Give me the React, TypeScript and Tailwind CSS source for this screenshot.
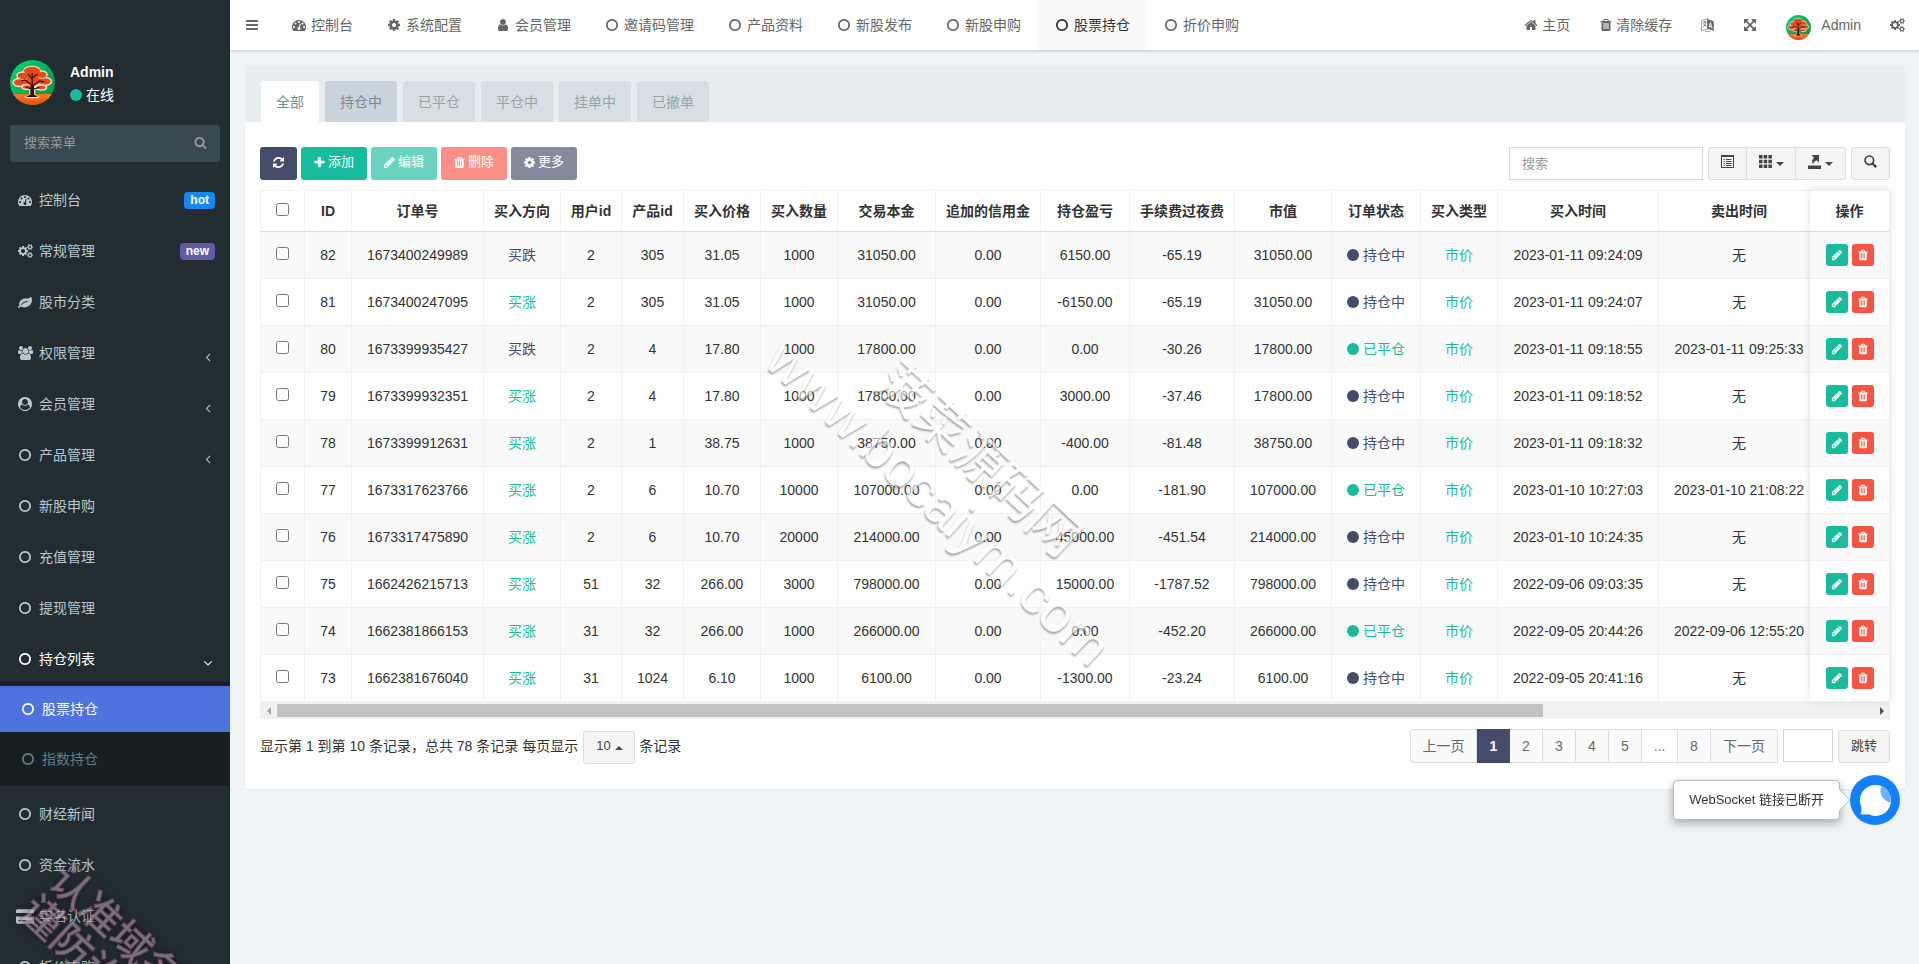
import { useState } from "react";
import type { ReactNode } from "react";
import clsx from "clsx";

// Font Awesome 4 outlines, drawn on a 1792 grid
const ICONS = {
  bars: "M1664 1344v128q0 26-19 45t-45 19h-1408q-26 0-45-19t-19-45v-128q0-26 19-45t45-19h1408q26 0 45 19t19 45zm0-512v128q0 26-19 45t-45 19h-1408q-26 0-45-19t-19-45v-128q0-26 19-45t45-19h1408q26 0 45 19t19 45zm0-512v128q0 26-19 45t-45 19h-1408q-26 0-45-19t-19-45v-128q0-26 19-45t45-19h1408q26 0 45 19t19 45z",
  search:
    "M1216 832q0-185-131.5-316.5t-316.5-131.5-316.5 131.5-131.5 316.5 131.5 316.5 316.5 131.5 316.5-131.5 131.5-316.5zm512 832q0 52-38 90t-90 38q-54 0-90-38l-343-342q-179 124-399 124-143 0-273.5-55.5t-225-150-150-225-55.5-273.5 55.5-273.5 150-225 225-150 273.5-55.5 273.5 55.5 225 150 150 225 55.5 273.5q0 220-124 399l343 343q37 37 37 90z",
  circleO:
    "M896 352q-148 0-273 73t-198 198-73 273 73 273 198 198 273 73 273-73 198-198 73-273-73-273-198-198-273-73zm768 544q0 209-103 385.5t-279.5 279.5-385.5 103-385.5-103-279.5-279.5-103-385.5 103-385.5 279.5-279.5 385.5-103 385.5 103 279.5 279.5 103 385.5z",
  tachometer:
    "M384 1152q0-53-37.5-90.5t-90.5-37.5-90.5 37.5-37.5 90.5 37.5 90.5 90.5 37.5 90.5-37.5 37.5-90.5zm192-448q0-53-37.5-90.5t-90.5-37.5-90.5 37.5-37.5 90.5 37.5 90.5 90.5 37.5 90.5-37.5 37.5-90.5zm428 481l101-382q6-26-7.5-48.5t-38.5-29.5-48 6.5-30 39.5l-101 382q-60 5-107 43.5t-63 98.5q-20 77 20 146t117 89 146-20 89-117q16-60-6-117t-72-91zm660-33q0-53-37.5-90.5t-90.5-37.5-90.5 37.5-37.5 90.5 37.5 90.5 90.5 37.5 90.5-37.5 37.5-90.5zm-640-640q0-53-37.5-90.5t-90.5-37.5-90.5 37.5-37.5 90.5 37.5 90.5 90.5 37.5 90.5-37.5 37.5-90.5zm448 192q0-53-37.5-90.5t-90.5-37.5-90.5 37.5-37.5 90.5 37.5 90.5 90.5 37.5 90.5-37.5 37.5-90.5zm320 448q0 261-141 483-19 29-54 29h-1402q-35 0-54-29-141-221-141-483 0-182 71-348t191-286 286-191 348-71 348 71 286 191 191 286 71 348z",
  cog: "M1152 896q0-106-75-181t-181-75-181 75-75 181 75 181 181 75 181-75 75-181zm512-109v222q0 12-8 23t-20 13l-185 28q-19 54-39 91 35 50 107 138 10 12 10 25t-9 23q-27 37-99 108t-94 71q-12 0-26-9l-138-108q-44 23-91 38-16 136-29 186-7 28-36 28h-222q-14 0-24.5-8.5t-11.5-21.5l-28-184q-49-16-90-37l-141 107q-10 9-25 9-14 0-25-11-126-114-165-168-7-10-7-23 0-12 8-23 15-21 51-66.5t54-70.5q-27-50-41-99l-183-27q-13-2-21-12.5t-8-23.5v-222q0-12 8-23t19-13l186-28q14-46 39-92-40-57-107-138-10-12-10-24 0-10 9-23 26-36 98.5-107.5t94.5-71.5q13 0 26 10l138 107q44-23 91-38 16-136 29-186 7-28 36-28h222q14 0 24.5 8.5t11.5 21.5l28 184q49 16 90 37l142-107q9-9 24-9 13 0 25 10 129 119 165 170 7 8 7 22 0 12-8 23-15 21-51 66.5t-54 70.5q26 50 41 98l183 28q13 2 21 12.5t8 23.5z",
  user: "M1536 1399q0 109-62.5 187t-150.5 78h-854q-88 0-150.5-78t-62.5-187q0-85 8.5-160.5t31.5-152 58.5-131 94-89 134.5-34.5q131 128 313 128t313-128q76 0 134.5 34.5t94 89 58.5 131 31.5 152 8.5 160.5zm-256-887q0 159-112.5 271.5t-271.5 112.5-271.5-112.5-112.5-271.5 112.5-271.5 271.5-112.5 271.5 112.5 112.5 271.5z",
  plus: "M1600 736v192q0 40-28 68t-68 28h-416v416q0 40-28 68t-68 28h-192q-40 0-68-28t-28-68v-416h-416q-40 0-68-28t-28-68v-192q0-40 28-68t68-28h416v-416q0-40 28-68t68-28h192q40 0 68 28t28 68v416h416q40 0 68 28t28 68z",
  pencil:
    "M491 1536l91-91-235-235-91 91v107h128v128h107zm523-928q0-22-22-22-10 0-17 7l-542 542q-7 7-7 17 0 22 22 22 10 0 17-7l542-542q7-7 7-17zm-54-192l416 416-832 832h-416v-416zm683 96q0 53-37 90l-166 166-416-416 166-165q36-38 90-38 53 0 91 38l235 234q37 39 37 91z",
  trash:
    "M704 1376v-704q0-14-9-23t-23-9h-64q-14 0-23 9t-9 23v704q0 14 9 23t23 9h64q14 0 23-9t9-23zm256 0v-704q0-14-9-23t-23-9h-64q-14 0-23 9t-9 23v704q0 14 9 23t23 9h64q14 0 23-9t9-23zm256 0v-704q0-14-9-23t-23-9h-64q-14 0-23 9t-9 23v704q0 14 9 23t23 9h64q14 0 23-9t9-23zm-544-992h448l-48-117q-7-9-17-11h-317q-10 2-17 11zm928 32v64q0 14-9 23t-23 9h-96v948q0 83-47 143.5t-113 60.5h-832q-66 0-113-58.5t-47-141.5v-952h-96q-14 0-23-9t-9-23v-64q0-14 9-23t23-9h309l70-167q15-37 54-63t79-26h320q40 0 79 26t54 63l70 167h309q14 0 23 9t9 23z",
  refresh:
    "M1639 1056q0 5-1 7-64 268-268 434.5t-478 166.5q-146 0-282.5-55t-243.5-157l-129 129q-19 19-45 19t-45-19-19-45v-448q0-26 19-45t45-19h448q26 0 45 19t19 45-19 45l-137 137q71 66 161 102t187 36q134 0 250-65t186-179q11-17 53-117 8-23 30-23h192q13 0 22.5 9.5t9.5 22.5zm25-800v448q0 26-19 45t-45 19h-448q-26 0-45-19t-19-45 19-45l138-138q-148-137-349-137-134 0-250 65t-186 179q-11 17-53 117-8 23-30 23h-199q-13 0-22.5-9.5t-9.5-22.5v-7q65-268 270-434.5t480-166.5q146 0 284 55.5t245 156.5l130-129q19-19 45-19t45 19 19 45z",
  home: "M1472 992v480q0 26-19 45t-45 19h-384v-384h-256v384h-384q-26 0-45-19t-19-45v-480q0-1 .5-3t.5-3l575-474 575 474q1 2 1 6zm223-69l-62 74q-8 9-21 11h-3q-13 0-21-7l-692-577-692 577q-12 8-24 7-13-2-21-11l-62-74q-8-10-7-23.5t11-21.5l719-599q32-26 76-26t76 26l244 204v-195q0-14 9-23t23-9h192q14 0 23 9t9 23v408l219 182q10 8 11 21.5t-7 23.5z",
  leaf: "M1280 832q0-26-19-45t-45-19q-172 0-318 49.5t-259.5 134-235.5 219.5q-19 21-19 45 0 26 19 45t45 19q24 0 45-19 27-24 74-71t67-66q137-124 268.5-176t313.5-52q26 0 45-19t19-45zm512-198q0 95-20 193-46 224-184.5 383t-357.5 268q-214 108-438 108-148 0-286-47-15-5-88-42t-96-37q-16 0-39.5 32t-45 70-52.5 70-60 32q-43 0-63.5-17.5t-45.5-59.5q-2-4-6-11t-5.5-10-3-9.5-1.5-13.5q0-35 31-73.5t68-65.5 68-56 31-48q0-4-14-38t-16-44q-9-51-9-104 0-115 43.5-220t119-184.5 170.5-139 204-95.5q55-18 145-25.5t179.5-9 178.5-6 163.5-24 113.5-56.5l29.5-29.5 29.5-28 27-20 36.5-16 43.5-4.5q39 0 70.5 46t47.5 112 24 124 8 96z",
  expand:
    "M1411 541l-355 355 355 355 144-144q29-31 70-14 39 17 39 59v448q0 26-19 45t-45 19h-448q-42 0-59-40-17-39 14-69l144-144-355-355-355 355 144 144q31 30 14 69-17 40-59 40h-448q-26 0-45-19t-19-45v-448q0-42 40-59 39-17 69 14l144 144 355-355-355-355-144 144q-19 19-45 19-12 0-24-5-40-17-40-59v-448q0-26 19-45t45-19h448q42 0 59 40 17 39-14 69l-144 144 355 355 355-355-144-144q-31-30-14-69 17-40 59-40h448q26 0 45 19t19 45v448q0 42-39 59-13 5-25 5-26 0-45-19z",
  angleLeft:
    "M1203 544q0 13-10 23l-393 393 393 393q10 10 10 23t-10 23l-50 50q-10 10-23 10t-23-10l-466-466q-10-10-10-23t10-23l466-466q10-10 23-10t23 10l50 50q10 10 10 23z",
  angleDown:
    "M1395 736q0 13-10 23l-466 466q-10 10-23 10t-23-10l-466-466q-10-10-10-23t10-23l50-50q10-10 23-10t23 10l393 393 393-393q10-10 23-10t23 10l50 50q10 10 10 23z",
  users:
    "M593 896q-162 5-265 128h-134q-82 0-138-40.5t-56-118.5q0-353 124-353 6 0 43.5 21t97.5 42.5 119 21.5q67 0 133-23-5 37-5 66 0 159 93 293zm1071 637q0 120-73 189.5t-194 69.5h-874q-121 0-194-69.5t-73-189.5q0-53 3.5-103.5t14-109 26.5-108.5 43-97.5 62-81 85.5-53.5 111.5-20q10 0 43 21.5t73 48 107 48 135 21.5 135-21.5 107-48 73-48 43-21.5q61 0 111.5 20t85.5 53.5 62 81 43 97.5 26.5 108.5 14 109 3.5 103.5zm-1024-1277q0 106-75 181t-181 75-181-75-75-181 75-181 181-75 181 75 75 181zm704 384q0 159-112.5 271.5t-271.5 112.5-271.5-112.5-112.5-271.5 112.5-271.5 271.5-112.5 271.5 112.5 112.5 271.5zm576 225q0 78-56 118.5t-138 40.5h-134q-103-123-265-128 93-134 93-293 0-29-5-66 66 23 133 23 59 0 119-21.5t97.5-42.5 43.5-21q124 0 124 353zm-128-609q0 106-75 181t-181 75-181-75-75-181 75-181 181-75 181 75 75 181z",
  cogs: "M896 896q0-106-75-181t-181-75-181 75-75 181 75 181 181 75 181-75 75-181zm768 512q0-52-38-90t-90-38-90 38-38 90q0 53 37.5 90.5t90.5 37.5 90.5-37.5 37.5-90.5zm0-1024q0-52-38-90t-90-38-90 38-38 90q0 53 37.5 90.5t90.5 37.5 90.5-37.5 37.5-90.5zm-384 421v185q0 10-7 19.5t-16 10.5l-155 24q-11 35-32 76 34 48 90 115 7 11 7 20 0 12-7 19-23 30-82.5 89.5t-78.5 59.5q-11 0-21-7l-115-90q-37 19-77 31-11 108-23 155-7 24-30 24h-186q-11 0-20-7.5t-10-17.5l-23-153q-34-10-75-31l-118 89q-7 7-20 7-11 0-21-8-144-133-144-160 0-9 7-19 10-14 41-53t47-61q-23-44-35-82l-152-24q-10-1-17-9.5t-7-19.5v-185q0-10 7-19.5t16-10.5l155-24q11-35 32-76-34-48-90-115-7-11-7-20 0-12 7-20 22-30 82-89t79-59q11 0 21 7l115 90q34-18 77-32 11-108 23-154 7-24 30-24h186q11 0 20 7.5t10 17.5l23 153q34 10 75 31l118-89q8-7 20-7 11 0 21 8 144 133 144 160 0 8-7 19-12 16-42 54t-45 60q23 48 34 82l152 23q10 2 17 10.5t7 19.5zm640 533v140q0 16-149 31-12 27-30 52 51 113 51 138 0 4-4 7-122 71-124 71-8 0-46-47t-52-68q-20 2-30 2t-30-2q-14 21-52 68t-46 47q-2 0-124-71-4-3-4-7 0-25 51-138-18-25-30-52-149-15-149-31v-140q0-16 149-31 13-29 30-52-51-113-51-138 0-4 4-7 4-2 35-20t59-34 30-16q8 0 46 46.5t52 67.5q20-2 30-2t30 2q51-71 92-112l6-2q4 0 124 70 4 3 4 7 0 25-51 138 17 23 30 52 149 15 149 31zm0-1024v140q0 16-149 31-12 27-30 52 51 113 51 138 0 4-4 7-122 71-124 71-8 0-46-47t-52-68q-20 2-30 2t-30-2q-14 21-52 68t-46 47q-2 0-124-71-4-3-4-7 0-25 51-138-18-25-30-52-149-15-149-31v-140q0-16 149-31 13-29 30-52-51-113-51-138 0-4 4-7 4-2 35-20t59-34 30-16q8 0 46 46.5t52 67.5q20-2 30-2t30 2q51-71 92-112l6-2q4 0 124 70 4 3 4 7 0 25-51 138 17 23 30 52 149 15 149 31z",
  userCircle:
    "M1523 1339q-22-155-87.5-257.5t-184.5-118.5q-67 74-159.5 115.5t-195.5 41.5-195.5-41.5-159.5-115.5q-119 16-184.5 118.5t-87.5 257.5q106 150 271 237.5t356 87.5 356-87.5 271-237.5zm-243-699q0-159-112.5-271.5t-271.5-112.5-271.5 112.5-112.5 271.5 112.5 271.5 271.5 112.5 271.5-112.5 112.5-271.5zm512 256q0 182-71 347.5t-190.5 286-285.5 191.5-349 71q-182 0-348-71t-286-191-191-286-71-348 71-348 191-286 286-191 348-71 348 71 286 191 191 286 71 348z",
  creditCard:
    "M0 1504v-608h1920v608q0 66-47 113t-113 47h-1600q-66 0-113-47t-47-113zm640-224v128h384v-128h-384zm-384 0v128h256v-128h-256zm1504-1152q66 0 113 47t47 113v224h-1920v-224q0-66 47-113t113-47h1600z",
};

type IconName = keyof typeof ICONS;

const WIDE: IconName[] = ["users", "cogs", "creditCard"];

function Icon({ name, size = 14 }: { name: IconName; size?: 12 | 13 | 14 | 17 }) {
  const wide = WIDE.includes(name);
  return (
    <svg
      aria-hidden="true"
      viewBox={wide ? "0 0 1920 1792" : "0 0 1792 1792"}
      fill="currentColor"
      fillRule={name === "userCircle" ? "evenodd" : "nonzero"}
      className={clsx(
        "shrink-0 overflow-visible",
        size === 12 && "h-3 w-3",
        size === 13 && "h-[13px] w-[13px]",
        size === 14 && "h-[14px]",
        size === 14 && (wide ? "w-[15px]" : "w-[14px]"),
        size === 17 && "h-[17px] w-[18px]",
      )}
    >
      <path d={ICONS[name]} />
    </svg>
  );
}

function Avatar({ className }: { className: string }) {
  return (
    <svg viewBox="0 0 45 45" className={className} role="img" aria-label="Admin">
      <defs>
        <clipPath id="avatarClip">
          <circle cx="22.5" cy="22.5" r="22.5" />
        </clipPath>
        <linearGradient id="avatarSky" x1="0" y1="0" x2="1" y2="1">
          <stop offset="0" stopColor="#00d878" />
          <stop offset="1" stopColor="#078a3e" />
        </linearGradient>
        <linearGradient id="avatarGround" x1="0" y1="0" x2="0" y2="1">
          <stop offset="0" stopColor="#f47a1c" />
          <stop offset="1" stopColor="#f04a10" />
        </linearGradient>
      </defs>
      <g clipPath="url(#avatarClip)">
        <rect width="45" height="45" fill="url(#avatarSky)" />
        <rect y="34" width="45" height="11" fill="url(#avatarGround)" />
        <g fill="#e8481a" stroke="#f5d9c0" strokeWidth="1.6">
          <path d="M15 37.5 20 35.5V26h4.5v9.5L29 37.5z" fill="#2a1512" />
          <ellipse cx="22" cy="10.5" rx="8" ry="4" />
          <ellipse cx="13" cy="15.5" rx="6" ry="3.5" />
          <ellipse cx="31" cy="14.5" rx="6" ry="3.5" />
          <ellipse cx="10" cy="22.5" rx="7" ry="4" />
          <ellipse cx="34.5" cy="21.5" rx="7" ry="4" />
          <ellipse cx="17" cy="27" rx="5" ry="2.5" />
          <ellipse cx="31" cy="27.5" rx="5.5" ry="2.5" />
        </g>
        <g fill="#e8481a">
          <ellipse cx="22" cy="11" rx="8" ry="4" />
          <ellipse cx="17" cy="18" rx="8" ry="4" />
          <ellipse cx="28" cy="17" rx="8" ry="4" />
          <ellipse cx="22" cy="22" rx="10" ry="3" />
        </g>
        <g fill="none" stroke="#f5d9c0" strokeWidth=".8">
          <path d="M9 18.5q4 2 8 .5M36 17.5q-4 2-8 0M13 25.5q3-2 6-1M32 25q-3-2-6-.5" />
        </g>
        <g fill="none" stroke="#2a1512" strokeWidth="1.2">
          <path d="M22.2 37V13M22 25l-7-5-4 1M22.5 26l7-5 5 1M22 19l-4-5M22.5 18l5-4M21 29l-5-2M23.5 29l6-1.5" />
        </g>
        <path d="M16 37l4.5-2.5V25h3.5v9.5l4 2.5z" fill="#2a1512" />
      </g>
    </svg>
  );
}

function Caret({ up = false }: { up?: boolean }) {
  return (
    <svg aria-hidden="true" viewBox="0 0 8 4" className="h-1 w-2 shrink-0" fill="currentColor">
      <path d={up ? "M0 4h8L4 0z" : "M0 0h8L4 4z"} />
    </svg>
  );
}

interface MenuItem {
  icon: IconName;
  label: string;
  badge?: string;
  arrow?: boolean;
}

const MENU_TOP: MenuItem[] = [
  { icon: "tachometer", label: "控制台", badge: "hot" },
  { icon: "cogs", label: "常规管理", badge: "new" },
  { icon: "leaf", label: "股市分类" },
  { icon: "users", label: "权限管理", arrow: true },
  { icon: "userCircle", label: "会员管理", arrow: true },
  { icon: "circleO", label: "产品管理", arrow: true },
  { icon: "circleO", label: "新股申购" },
  { icon: "circleO", label: "充值管理" },
  { icon: "circleO", label: "提现管理" },
];

const MENU_BOTTOM: MenuItem[] = [
  { icon: "circleO", label: "财经新闻" },
  { icon: "circleO", label: "资金流水" },
  { icon: "creditCard", label: "实名认证" },
  { icon: "circleO", label: "折价申购" },
];

const NAV_TABS: { icon: IconName; label: string }[] = [
  { icon: "tachometer", label: "控制台" },
  { icon: "cog", label: "系统配置" },
  { icon: "user", label: "会员管理" },
  { icon: "circleO", label: "邀请码管理" },
  { icon: "circleO", label: "产品资料" },
  { icon: "circleO", label: "新股发布" },
  { icon: "circleO", label: "新股申购" },
  { icon: "circleO", label: "股票持仓" },
  { icon: "circleO", label: "折价申购" },
];

const STATUS_TABS = ["全部", "持仓中", "已平仓", "平仓中", "挂单中", "已撤单"];

const COLUMNS = [
  { title: "ID", width: 47 },
  { title: "订单号", width: 132 },
  { title: "买入方向", width: 77 },
  { title: "用户id", width: 61 },
  { title: "产品id", width: 62 },
  { title: "买入价格", width: 77 },
  { title: "买入数量", width: 77 },
  { title: "交易本金", width: 98 },
  { title: "追加的信用金", width: 105 },
  { title: "持仓盈亏", width: 89 },
  { title: "手续费过夜费", width: 105 },
  { title: "市值", width: 97 },
  { title: "订单状态", width: 89 },
  { title: "买入类型", width: 77 },
  { title: "买入时间", width: 161 },
  { title: "卖出时间", width: 161 },
];

interface Order {
  id: number;
  no: string;
  up: boolean;
  user: number;
  product: number;
  price: string;
  amount: number;
  principal: string;
  profit: string;
  fee: string;
  buyTime: string;
  sellTime?: string;
}

const ORDERS: Order[] = [
  { id: 82, no: "1673400249989", up: false, user: 2, product: 305, price: "31.05", amount: 1000, principal: "31050.00", profit: "6150.00", fee: "-65.19", buyTime: "2023-01-11 09:24:09" },
  { id: 81, no: "1673400247095", up: true, user: 2, product: 305, price: "31.05", amount: 1000, principal: "31050.00", profit: "-6150.00", fee: "-65.19", buyTime: "2023-01-11 09:24:07" },
  { id: 80, no: "1673399935427", up: false, user: 2, product: 4, price: "17.80", amount: 1000, principal: "17800.00", profit: "0.00", fee: "-30.26", buyTime: "2023-01-11 09:18:55", sellTime: "2023-01-11 09:25:33" },
  { id: 79, no: "1673399932351", up: true, user: 2, product: 4, price: "17.80", amount: 1000, principal: "17800.00", profit: "3000.00", fee: "-37.46", buyTime: "2023-01-11 09:18:52" },
  { id: 78, no: "1673399912631", up: true, user: 2, product: 1, price: "38.75", amount: 1000, principal: "38750.00", profit: "-400.00", fee: "-81.48", buyTime: "2023-01-11 09:18:32" },
  { id: 77, no: "1673317623766", up: true, user: 2, product: 6, price: "10.70", amount: 10000, principal: "107000.00", profit: "0.00", fee: "-181.90", buyTime: "2023-01-10 10:27:03", sellTime: "2023-01-10 21:08:22" },
  { id: 76, no: "1673317475890", up: true, user: 2, product: 6, price: "10.70", amount: 20000, principal: "214000.00", profit: "45000.00", fee: "-451.54", buyTime: "2023-01-10 10:24:35" },
  { id: 75, no: "1662426215713", up: true, user: 51, product: 32, price: "266.00", amount: 3000, principal: "798000.00", profit: "15000.00", fee: "-1787.52", buyTime: "2022-09-06 09:03:35" },
  { id: 74, no: "1662381866153", up: true, user: 31, product: 32, price: "266.00", amount: 1000, principal: "266000.00", profit: "0.00", fee: "-452.20", buyTime: "2022-09-05 20:44:26", sellTime: "2022-09-06 12:55:20" },
  { id: 73, no: "1662381676040", up: true, user: 31, product: 1024, price: "6.10", amount: 1000, principal: "6100.00", profit: "-1300.00", fee: "-23.24", buyTime: "2022-09-05 20:41:16" },
];

function SidebarLink({ item }: { item: MenuItem }) {
  return (
    <li className="mt-[5px]">
      <a href="#" className="flex h-[46px] items-center pr-[15px] pl-[15px] text-[#b8c7ce] hover:text-white">
        <span className="flex w-5 justify-center">
          <Icon name={item.icon} size={item.icon === "creditCard" ? 17 : 14} />
        </span>
        <span className="ml-1">{item.label}</span>
        {item.badge && (
          <span
            className={clsx(
              "ml-auto h-[17px] rounded-sm px-1.5 text-xs leading-4 font-bold text-white",
              item.badge === "hot" ? "bg-[#1688f1]" : "bg-[#605ca8]",
            )}
          >
            {item.badge}
          </span>
        )}
        {item.arrow && (
          <span className="mt-2 ml-auto">
            <Icon name="angleLeft" />
          </span>
        )}
      </a>
    </li>
  );
}

function Sidebar() {
  return (
    <aside className="w-[230px] shrink-0 overflow-hidden bg-[#222d32]">
      <div className="flex items-center px-2.5 pt-[60px]">
        <Avatar className="h-[45px] w-[45px]" />
        <div className="ml-[15px] text-white">
          <p className="mt-px font-bold leading-5">Admin</p>
          <a href="#" className="mt-[3px] flex items-center gap-1 leading-5">
            <span className="h-3 w-3 rounded-full bg-[#18bc9c]" />
            在线
          </a>
        </div>
      </div>
      <form className="mx-2.5 mt-5 flex h-[37px] items-center rounded-[3px] bg-[#374850] pr-[13px] pl-3.5">
        <input
          type="text"
          aria-label="搜索菜单"
          placeholder="搜索菜单"
          className="min-w-0 flex-1 bg-transparent text-[13px] text-white outline-none placeholder:text-[#999]"
        />
        <button type="button" aria-label="搜索" className="pb-0.5 text-[#999]">
          <Icon name="search" size={13} />
        </button>
      </form>
      <ul className="pt-2.5">
        {MENU_TOP.map((item) => (
          <SidebarLink key={item.label} item={item} />
        ))}
        <li className="mt-[5px]">
          <a href="#" className="flex h-[46px] items-center px-[15px] text-white">
            <span className="flex w-5 justify-center">
              <Icon name="circleO" />
            </span>
            <span className="ml-1">持仓列表</span>
            <span className="mt-2 ml-auto">
              <Icon name="angleDown" />
            </span>
          </a>
          <ul className="flex flex-col gap-1 bg-[#181f23] py-1">
            <li>
              <a href="#" className="flex h-[46px] items-center bg-[#4e73df] pl-[18px] text-white">
                <span className="flex w-5 justify-center">
                  <Icon name="circleO" />
                </span>
                <span className="ml-1">股票持仓</span>
              </a>
            </li>
            <li>
              <a href="#" className="flex h-[46px] items-center pl-[18px] text-[#5f7d8a]">
                <span className="flex w-5 justify-center">
                  <Icon name="circleO" />
                </span>
                <span className="ml-1">指数持仓</span>
              </a>
            </li>
          </ul>
        </li>
        {MENU_BOTTOM.map((item) => (
          <SidebarLink key={item.label} item={item} />
        ))}
      </ul>
    </aside>
  );
}

function Topbar() {
  return (
    <header className="relative z-10 flex h-[50px] shrink-0 items-stretch bg-white text-[#666] shadow-[0_1px_3px_rgba(0,0,0,0.2)]">
      <button type="button" aria-label="切换菜单" className="flex w-11 items-center pl-[15px]">
        <Icon name="bars" />
      </button>
      <nav className="flex">
        {NAV_TABS.map((tab) => {
          const active = tab.label === "股票持仓";
          return (
            <a
              key={tab.label}
              href="#"
              className={clsx(
                "flex items-center px-4",
                active ? "bg-[#f9f9f9] text-[#333]" : "hover:text-[#333]",
              )}
            >
              <span className="mr-[3px] flex w-[18px] justify-center">
                <Icon name={tab.icon} />
              </span>
              {tab.label}
            </a>
          );
        })}
      </nav>
      <div className="ml-auto flex items-center gap-[29px] pr-[14px]">
        <a href="#" className="flex items-center gap-1">
          <Icon name="home" />
          主页
        </a>
        <a href="#" className="flex items-center gap-[3px]">
          <Icon name="trash" />
          清除缓存
        </a>
        <a href="#" aria-label="语言">
          <svg viewBox="0 0 13 14" className="h-[14px] w-[13px]" fill="none" stroke="currentColor">
            <path d="M.5 2.5 7 .5v10.5l-6.5 2z" strokeWidth=".6" />
            <path d="M2 4.5l3.5-1M3.7 3v1.5M5 4q-1 4-3 5M2.3 5.500q1 2 3.2 2.5" strokeWidth=".8" />
            <path d="M6.5 1.5l6 2v9l-6-2z" fill="currentColor" strokeWidth=".6" />
            <path d="M8 9.5l1.5-5 1.7 6M8.5 8l2.2.7" stroke="#fff" strokeWidth=".9" />
            <path d="M4 13.4h5" strokeWidth=".6" />
          </svg>
        </a>
        <a href="#" aria-label="全屏">
          <Icon name="expand" />
        </a>
        <a href="#" className="flex items-center gap-2.5">
          <Avatar className="mt-1 h-[25px] w-[25px]" />
          Admin
        </a>
        <a href="#" aria-label="设置">
          <Icon name="cogs" />
        </a>
      </div>
    </header>
  );
}

function ToolButton({
  icon,
  color,
  label,
  disabled,
}: {
  icon: IconName;
  color: string;
  label: string;
  disabled?: boolean;
}) {
  return (
    <button
      type="button"
      disabled={disabled}
      className={clsx(
        "flex h-[33px] items-center gap-0.5 rounded-[3px] pr-[13px] pb-0.5 pl-3 text-[13px] text-white disabled:opacity-65",
        color,
      )}
    >
      <Icon name={icon} size={13} />
      {label}
    </button>
  );
}

function Toolbar() {
  const addon = "flex h-[33px] items-center justify-center gap-1 border-[#ddd] bg-[#f4f4f4] text-[#444]";
  return (
    <div className="flex items-center justify-between">
      <div className="flex gap-1">
        <button
          type="button"
          aria-label="刷新"
          className="flex h-[33px] w-[37px] items-center justify-center rounded-[3px] bg-[#444c69] pb-0.5 text-white"
        >
          <Icon name="refresh" size={13} />
        </button>
        <ToolButton icon="plus" color="bg-[#18bc9c]" label="添加" />
        <ToolButton icon="pencil" color="bg-[#18bc9c]" label="编辑" disabled />
        <ToolButton icon="trash" color="bg-[#f75444]" label="删除" disabled />
        <ToolButton icon="cog" color="bg-[#444c69]" label="更多" disabled />
      </div>
      <div className="flex gap-[5px]">
        <input
          type="text"
          aria-label="搜索"
          placeholder="搜索"
          className="h-[33px] w-[194px] border border-[#d2d6de] px-3 text-[13px] outline-none placeholder:text-[#999]"
        />
        <div className="flex">
          <button type="button" aria-label="切换视图" className={clsx(addon, "w-[39px] rounded-l-[3px] border")}>
            <svg viewBox="0 0 13 13" className="mb-1 h-[13px] w-[13px]" fill="none" stroke="currentColor">
              <path d="M.5.5h12v12H.5z" />
              <path d="M0 1h13" strokeWidth="2" />
              <path d="M2.5 4.5h1.2M5 4.5h5.5M2.5 6.5h1.2M5 6.5h5.5M2.5 8.5h1.2M5 8.5h5.5M2.5 10.5h1.2M5 10.5h5.5" />
            </svg>
          </button>
          <button type="button" aria-label="列" aria-haspopup="menu" className={clsx(addon, "w-[49px] border-y border-r")}>
            <svg viewBox="0 0 13 13" className="mb-1 h-[13px] w-[13px]" fill="currentColor">
              <path d="M0 0h3.5v3.5H0zM4.7 0h3.5v3.5H4.7zM9.4 0h3.5v3.5H9.4zM0 4.7h3.5v3.5H0zM4.7 4.7h3.5v3.5H4.7zM9.4 4.7h3.5v3.5H9.4zM0 9.4h3.5v3.5H0zM4.7 9.4h3.5v3.5H4.7zM9.4 9.4h3.5v3.5H9.4z" />
            </svg>
            <Caret />
          </button>
          <button
            type="button"
            aria-label="导出数据"
            aria-haspopup="menu"
            className={clsx(addon, "w-[50px] rounded-r-[3px] border-y border-r")}
          >
            <svg viewBox="0 0 13 14" className="mb-1 h-[14px] w-[13px]" fill="currentColor">
              <path d="M0 10.5h13V14H0z" />
              <path d="M3.5 0h7.5v7.5L8.7 5.2Q5.5 6.5 5 9 2.5 6 6 2.7z" />
            </svg>
            <Caret />
          </button>
        </div>
        <button type="button" aria-label="普通搜索" className={clsx(addon, "w-[39px] rounded-[3px] border")}>
          <svg viewBox="0 0 13 13" className="mb-1 h-[13px] w-[13px]" fill="none" stroke="currentColor">
            <circle cx="5.3" cy="5.3" r="4.3" strokeWidth="1.7" />
            <path d="M8.5 8.5l3.7 3.7" strokeWidth="2.3" />
          </svg>
        </button>
      </div>
    </div>
  );
}

function Cell({ children, className }: { children: ReactNode; className?: string }) {
  return <td className={clsx("h-[47px] border-r border-b border-[#f1f1f1]", className)}>{children}</td>;
}

function OrderRow({ order }: { order: Order }) {
  const closed = Boolean(order.sellTime);
  return (
    <tr className="bg-white odd:bg-[#f9f9f9]">
      <Cell className="border-l">
        <input type="checkbox" aria-label={`选择 ${order.id}`} className="mb-[5px] h-[13px] w-[13px] align-middle" />
      </Cell>
      <Cell>{order.id}</Cell>
      <Cell>{order.no}</Cell>
      <Cell className={order.up ? "text-[#18bc9c]" : "text-[#444c69]"}>{order.up ? "买涨" : "买跌"}</Cell>
      <Cell>{order.user}</Cell>
      <Cell>{order.product}</Cell>
      <Cell>{order.price}</Cell>
      <Cell>{order.amount}</Cell>
      <Cell>{order.principal}</Cell>
      <Cell>0.00</Cell>
      <Cell>{order.profit}</Cell>
      <Cell>{order.fee}</Cell>
      <Cell>{order.principal}</Cell>
      <Cell>
        <span
          className={clsx(
            "flex items-center justify-center gap-1",
            closed ? "text-[#18bc9c]" : "text-[#444c69]",
          )}
        >
          <span className="h-3 w-3 rounded-full bg-current" />
          {closed ? "已平仓" : "持仓中"}
        </span>
      </Cell>
      <Cell className="text-[#18bc9c]">市价</Cell>
      <Cell>{order.buyTime}</Cell>
      <Cell>{order.sellTime ?? "无"}</Cell>
      <Cell className="sticky right-0 bg-inherit">
        <div className="flex justify-center gap-1">
          <button
            type="button"
            aria-label="编辑"
            className="flex h-[22px] w-[22px] items-center justify-center rounded-[3px] bg-[#18bc9c] text-white"
          >
            <Icon name="pencil" size={12} />
          </button>
          <button
            type="button"
            aria-label="删除"
            className="flex h-[22px] w-[22px] items-center justify-center rounded-[3px] bg-[#f75444] text-white"
          >
            <Icon name="trash" size={12} />
          </button>
        </div>
      </Cell>
    </tr>
  );
}

function OrderTable() {
  const head = "h-[42px] border-t border-r border-b border-t-[#f1f1f1] border-r-[#f1f1f1] border-b-[#ddd] font-bold";
  return (
    <div className="relative mt-2.5">
      <div className="overflow-x-auto [scrollbar-width:none]">
        <table className="w-full min-w-[1640px] table-fixed border-separate border-spacing-0 text-center whitespace-nowrap text-[#333]">
          <colgroup>
            <col style={{ width: 45 }} />
            {COLUMNS.map((col) => (
              <col key={col.title} style={{ width: col.width }} />
            ))}
            <col style={{ width: 80 }} />
          </colgroup>
          <thead>
            <tr>
              <th className={clsx(head, "border-l border-l-[#f1f1f1]")}>
                <input type="checkbox" aria-label="全选" className="mb-[5px] h-[13px] w-[13px] align-middle" />
              </th>
              {COLUMNS.map((col) => (
                <th key={col.title} className={head}>
                  {col.title}
                </th>
              ))}
              <th className={clsx(head, "sticky right-0 bg-white")}>操作</th>
            </tr>
          </thead>
          <tbody>
            {ORDERS.map((order) => (
              <OrderRow key={order.id} order={order} />
            ))}
          </tbody>
        </table>
      </div>
      <div className="pointer-events-none absolute top-0 right-0 bottom-0 w-20 shadow-[0_-1px_8px_rgba(0,0,0,0.12)]" />
    </div>
  );
}

function ScrollBar({ visible, total }: { visible: number; total: number }) {
  return (
    <div className="flex h-[17px] items-center bg-[#f1f1f1]">
      <span className="flex w-[17px] justify-center text-[#a3a3a3]">
        <svg aria-hidden="true" viewBox="0 0 4 8" className="h-2 w-1" fill="currentColor">
          <path d="M4 0v8L0 4z" />
        </svg>
      </span>
      <div className="flex-1">
        <div className="h-[13px] bg-[#c1c1c1]" style={{ width: `${(visible / total) * 100}%` }} />
      </div>
      <span className="flex w-[17px] justify-center text-[#505050]">
        <svg aria-hidden="true" viewBox="0 0 4 8" className="h-2 w-1" fill="currentColor">
          <path d="M0 0v8l4-4z" />
        </svg>
      </span>
    </div>
  );
}

function Pagination() {
  const [page, setPage] = useState(1);
  const item = "h-[34px] border-y border-r border-[#ddd] bg-[#fafafa] text-[#666]";
  return (
    <div className="mt-2.5 flex items-start justify-between">
      <div className="flex h-[34px] items-center text-[#333]">
        <label htmlFor="pageSize">显示第 1 到第 10 条记录，总共 78 条记录 每页显示</label>
        <span className="relative mt-0.5 mr-1 ml-[5px]">
          <select
            id="pageSize"
            className="h-[33px] w-[52px] appearance-none rounded-[3px] border border-[#ddd] bg-[#f4f4f4] pb-0.5 pl-3 text-[13px] text-[#444]"
          >
            <option>10</option>
            <option>25</option>
            <option>50</option>
          </select>
          <span className="pointer-events-none absolute top-[15px] right-3 text-[#444]">
            <Caret up />
          </span>
        </span>
        条记录
      </div>
      <div className="flex gap-[5px]">
        <nav className="flex">
          <button type="button" className={clsx(item, "w-[67px] rounded-l-[3px] border-l")}>
            上一页
          </button>
          {[1, 2, 3, 4, 5].map((n) => (
            <button
              key={n}
              type="button"
              onClick={() => setPage(n)}
              className={
                n === page
                  ? "h-[34px] w-[33px] bg-[#444c69] font-bold text-white"
                  : clsx(item, "w-[33px]")
              }
            >
              {n}
            </button>
          ))}
          <span className="flex h-[34px] w-9 items-center justify-center border-y border-r border-[#ddd] text-[#777]">
            ...
          </span>
          <button type="button" onClick={() => setPage(8)} className={clsx(item, "w-[33px]")}>
            8
          </button>
          <button type="button" className={clsx(item, "w-[67px]")}>
            下一页
          </button>
        </nav>
        <input type="text" aria-label="页码" className="h-[33px] w-[50px] border border-[#d2d6de] px-2 outline-none" />
        <button
          type="button"
          className="mt-px h-[33px] w-[52px] rounded-[3px] border border-[#ddd] bg-[#f4f4f4] text-[13px] text-[#444]"
        >
          跳转
        </button>
      </div>
    </div>
  );
}

function ChatWidget() {
  return (
    <div className="absolute top-[775px] right-[19px] z-20 flex items-center">
      <div className="relative mr-2.5 rounded border border-[#bbb] bg-white px-[15px] py-[9px] text-[13px] leading-5 text-[#333] shadow-[0_3px_8px_rgba(0,0,0,0.3)]">
        WebSocket 链接已断开
        <svg viewBox="0 0 12 22" className="absolute top-2 -right-3 h-[22px] w-3">
          <path d="M0 0l11 11L0 22z" fill="#fff" />
          <path d="M.5.5 11 11 .5 21.5" fill="none" stroke="#bbb" />
        </svg>
      </div>
      <button type="button" aria-label="客服" className="h-[50px] w-[50px]">
        <svg viewBox="0 0 50 50" className="h-[50px] w-[50px]">
          <circle cx="25" cy="25" r="25" fill="#1281ff" />
          <path d="M25 10a15.5 15.5 0 1 1-6.5 29.3q-4 .7-8.2-.3 1.7-3 1.2-6.5A15.5 15.5 0 0 1 25 10z" fill="#fff" />
          <path d="M31.5 11a15.5 15.5 0 0 1 9.3 16.2A11.5 11.5 0 0 1 31.5 11z" fill="#6eb0ff" />
        </svg>
      </button>
    </div>
  );
}

function Watermarks() {
  return (
    <div aria-hidden="true" className="pointer-events-none absolute inset-0 z-30 overflow-hidden">
      <div className="absolute top-[286px] left-[835px] origin-top-left rotate-43 text-center leading-[58px] whitespace-nowrap text-white opacity-60 [text-shadow:1px_2px_2px_#777]">
        <p className="text-[51px]">菠菜源码网</p>
        <p className="text-[54px]">www.bocaiym.com</p>
      </div>
      <div className="absolute top-[858px] left-[70px] origin-top-left rotate-43 text-[41px] leading-[42px] font-medium whitespace-nowrap text-[#a5a5a5] opacity-60 [-webkit-text-stroke:1px_#a0457c] [text-shadow:0_0_8px_#000]">
        <p>认准域名</p>
        <p>谨防诈骗</p>
      </div>
    </div>
  );
}

export default function App() {
  const [tab, setTab] = useState("全部");

  return (
    <div className="relative flex h-screen overflow-hidden bg-[#eff3f6] font-['Liberation_Sans','Noto_Sans_CJK_SC',sans-serif] text-sm">
      <Sidebar />
      <div className="flex min-w-0 flex-1 flex-col">
        <Topbar />
        <main className="p-[15px] pr-3.5">
          <section className="rounded-[3px] bg-white shadow-[0_1px_1px_rgba(0,0,0,0.05)]">
            <div className="flex gap-1.5 rounded-t-[3px] bg-[#e8edf0] px-4 pt-4">
              {STATUS_TABS.map((label) => (
                <button
                  key={label}
                  type="button"
                  onClick={() => setTab(label)}
                  className={clsx(
                    "h-[41px] rounded-t-[3px] px-[15px]",
                    label === tab && "bg-white text-[#7b8a8b]",
                    label !== tab && (label === "持仓中" ? "bg-[#c9d3dc] text-[#7b8a8b]" : "bg-[#d8dfe4] text-[#95a5a6]"),
                  )}
                >
                  {label}
                </button>
              ))}
            </div>
            <div className="px-[15px] pt-[25px] pb-[26px]">
              <Toolbar />
              <OrderTable />
              <ScrollBar visible={1630} total={2055} />
              <Pagination />
            </div>
          </section>
        </main>
      </div>
      <ChatWidget />
      <Watermarks />
    </div>
  );
}
